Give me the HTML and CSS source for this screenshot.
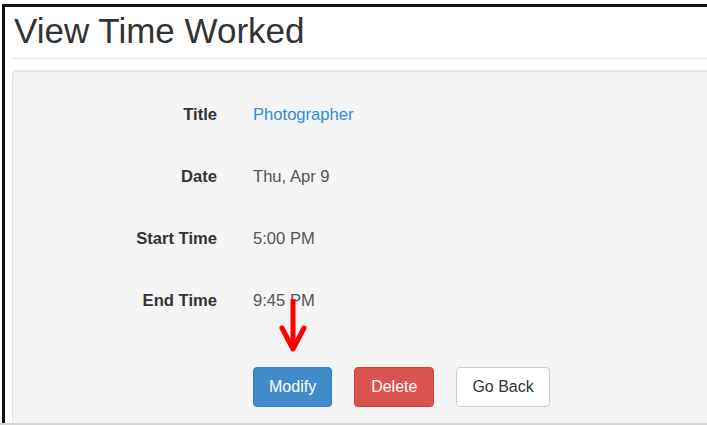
FILE: index.html
```html
<!DOCTYPE html>
<html lang="en">
<head>
<meta charset="utf-8">
<title>View Time Worked</title>
<link rel="stylesheet" href="styles.css">
</head>
<body>
<div class="frame">
  <div class="container">
    <h1 class="page-title">View Time Worked</h1>
    <div class="well">
      <dl class="details">
        <dt>Title</dt><dd><a href="#" class="link">Photographer</a></dd>
        <dt>Date</dt><dd>Thu, Apr 9</dd>
        <dt>Start Time</dt><dd>5:00 PM</dd>
        <dt>End Time</dt><dd>9:45 PM</dd>
      </dl>
      <div class="actions">
        <button class="btn btn-primary">Modify</button>
        <button class="btn btn-danger">Delete</button>
        <button class="btn btn-default">Go Back</button>
      </div>
      <!-- callout arrow pointing at the Modify button -->
      <svg class="callout" width="40" height="62" viewBox="0 0 40 62">
        <path d="M14 2 V52" stroke="#ff0000" stroke-width="5" fill="none"/>
        <path d="M3 31 L14 52 L25 31" stroke="#ff0000" stroke-width="5" stroke-linecap="round" stroke-linejoin="round" fill="none"/>
      </svg>
    </div>
  </div>
</div>
<div class="bottom-rule"></div>
</body>
</html>
```
FILE: styles.css
```css
html, body {
  margin: 0;
  padding: 0;
  background: #fff;
  overflow: hidden;
  height: 425px;
  font-family: "Liberation Sans", Arial, sans-serif;
  color: #333;
}

body {
  position: relative;
}

.frame {
  box-sizing: border-box;
  margin: 4px 0 0 2px;
  width: 705px;
  height: 419px;
  border-top: 3px solid #111;
  border-left: 3px solid #111;
  overflow: hidden;
}

.container {
  padding-left: 7px;
  margin-right: -12px;
}

.page-title {
  margin: 0;
  padding: 4px 0 0 2px;
  font-size: 35px;
  font-weight: normal;
  line-height: 40px;
  color: #333;
  height: 47px;
  border-bottom: 1px solid #eaeaea;
}

.well {
  position: relative;
  margin-top: 11px;
  background: #f4f4f4;
  border: 1px solid #e3e3e3;
  border-radius: 4px;
  box-shadow: inset 0 1px 1px rgba(0, 0, 0, 0.05);
  padding-top: 13px;
  height: 380px;
}

.details {
  margin: 0;
  display: grid;
  grid-template-columns: 204px 1fr;
  column-gap: 36px;
  font-size: 16.6px;
  line-height: 62px;
}

.details dt {
  text-align: right;
  font-weight: bold;
  color: #333;
}

.details dd {
  margin: 0;
  color: #555;
}

.link {
  color: #2f8fd8;
  text-decoration: none;
}

.actions {
  margin: 35px 0 0 240px;
  display: flex;
  gap: 22px;
}

.btn {
  font-family: "Liberation Sans", Arial, sans-serif;
  font-size: 16px;
  line-height: 20px;
  padding: 9px 15px;
  border: 1px solid transparent;
  border-radius: 4px;
  cursor: pointer;
}

.btn-primary {
  background: #428bca;
  border-color: #357ebd;
  color: #fff;
}

.btn-danger {
  background: #d9534f;
  border-color: #d43f3a;
  color: #fff;
  padding: 9px 16px;
}

.btn-default {
  background: #fff;
  border-color: #ccc;
  color: #333;
}

.callout {
  position: absolute;
  left: 266px;
  top: 226px;
}

.bottom-rule {
  position: absolute;
  left: 0;
  right: 0;
  top: 423px;
  height: 2px;
  background: #d6d6d6;
}
```
